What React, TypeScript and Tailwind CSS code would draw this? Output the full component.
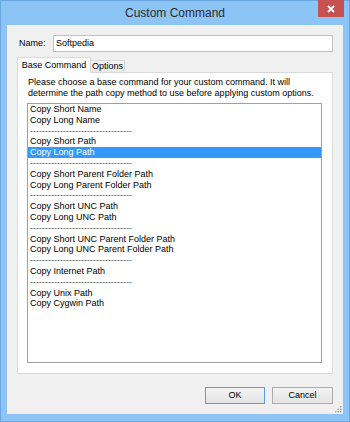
import React from "react";

const items = [
  "Copy Short Name",
  "Copy Long Name",
  "----------------------------------",
  "Copy Short Path",
  "Copy Long Path",
  "----------------------------------",
  "Copy Short Parent Folder Path",
  "Copy Long Parent Folder Path",
  "----------------------------------",
  "Copy Short UNC Path",
  "Copy Long UNC Path",
  "----------------------------------",
  "Copy Short UNC Parent Folder Path",
  "Copy Long UNC Parent Folder Path",
  "----------------------------------",
  "Copy Internet Path",
  "----------------------------------",
  "Copy Unix Path",
  "Copy Cygwin Path",
];

const selected = 4;

export default function App() {
  return (
    <div
      className="w-[350px] h-[422px] flex flex-col bg-[#8cc4f6] border border-[#6aa6e0] text-black"
      style={{ fontFamily: '"Liberation Sans", Arial, sans-serif' }}
    >
      {/* title bar */}
      <div className="h-[24px] flex items-center">
        <div className="w-[31px]" />
        <div className="flex-1 text-center text-[12px] text-[#2b2b2b]">Custom Command</div>
        <div className="self-start -mt-px mr-[5px] w-[26px] h-[17px] bg-[#c75050] flex items-center justify-center">
          <svg width="8" height="8" viewBox="0 0 8 8">
            <path d="M1 1 L7 7 M7 1 L1 7" stroke="#fff" strokeWidth="1.8" />
          </svg>
        </div>
      </div>

      {/* client area */}
      <div className="relative flex-1 mx-[6px] mb-[7px] bg-[#f0f0f0] flex flex-col pt-[10px] px-[10px] pb-[10px] text-[9px]">
        <div className="flex items-center h-[17px]">
          <span className="ml-[2px] w-[34px]">Name:</span>
          <div className="flex-1 h-[17px] bg-white border border-[#c2c2c2] flex items-center pl-[2px]">
            Softpedia
          </div>
        </div>

        {/* tabs */}
        <div className="relative z-10 mt-[5px] h-[15px] flex items-end">
          <div className="w-[74px] h-[16px] -mb-px bg-white border border-b-0 border-[#d9d9d9] flex items-center justify-center">
            Base Command
          </div>
          <div className="-ml-px w-[35px] h-[12px] bg-gradient-to-b from-[#f7f7f7] to-[#e8e8e8] border border-b-0 border-[#d9d9d9] flex items-center justify-center">
            Options
          </div>
        </div>

        <div className="flex-1 bg-white border border-[#d9d9d9] flex flex-col pl-[9px] pr-[10px] pb-[10px] pt-[4px]">
          <div className="pl-[1px] leading-[11px] whitespace-nowrap">
            <div>Please choose a base command for your custom command. It will</div>
            <div>determine the path copy method to use before applying custom options.</div>
          </div>
          <div className="mt-[4px] flex-1 border border-[#a0a0a0] bg-white leading-[10.8px] whitespace-nowrap">
            {items.map((t, i) => (
              <div
                key={i}
                className={
                  i === selected
                    ? "pl-[2px] bg-[#3399ff] text-white"
                    : t.startsWith("-")
                    ? "pl-[2px] text-[#555]"
                    : "pl-[2px]"
                }
              >
                {t}
              </div>
            ))}
          </div>
        </div>

        {/* buttons */}
        <div className="mt-[13px] flex justify-end gap-[7px]">
          <div className="w-[60px] h-[17px] border border-[#5b9de0] bg-gradient-to-b from-[#f2f2f2] to-[#e4e4e4] flex items-center justify-center">
            OK
          </div>
          <div className="w-[61px] h-[17px] border border-[#acacac] bg-gradient-to-b from-[#f2f2f2] to-[#e4e4e4] flex items-center justify-center">
            Cancel
          </div>
        </div>

        {/* size grip */}
        <svg className="absolute right-[1px] bottom-[1px]" width="7" height="7" viewBox="0 0 7 7">
          <rect x="5" y="0" width="1.5" height="1.5" fill="#a8a8a8" />
          <rect x="2.5" y="2.5" width="1.5" height="1.5" fill="#a8a8a8" />
          <rect x="5" y="2.5" width="1.5" height="1.5" fill="#a8a8a8" />
          <rect x="0" y="5" width="1.5" height="1.5" fill="#a8a8a8" />
          <rect x="2.5" y="5" width="1.5" height="1.5" fill="#a8a8a8" />
          <rect x="5" y="5" width="1.5" height="1.5" fill="#a8a8a8" />
        </svg>
      </div>
    </div>
  );
}
